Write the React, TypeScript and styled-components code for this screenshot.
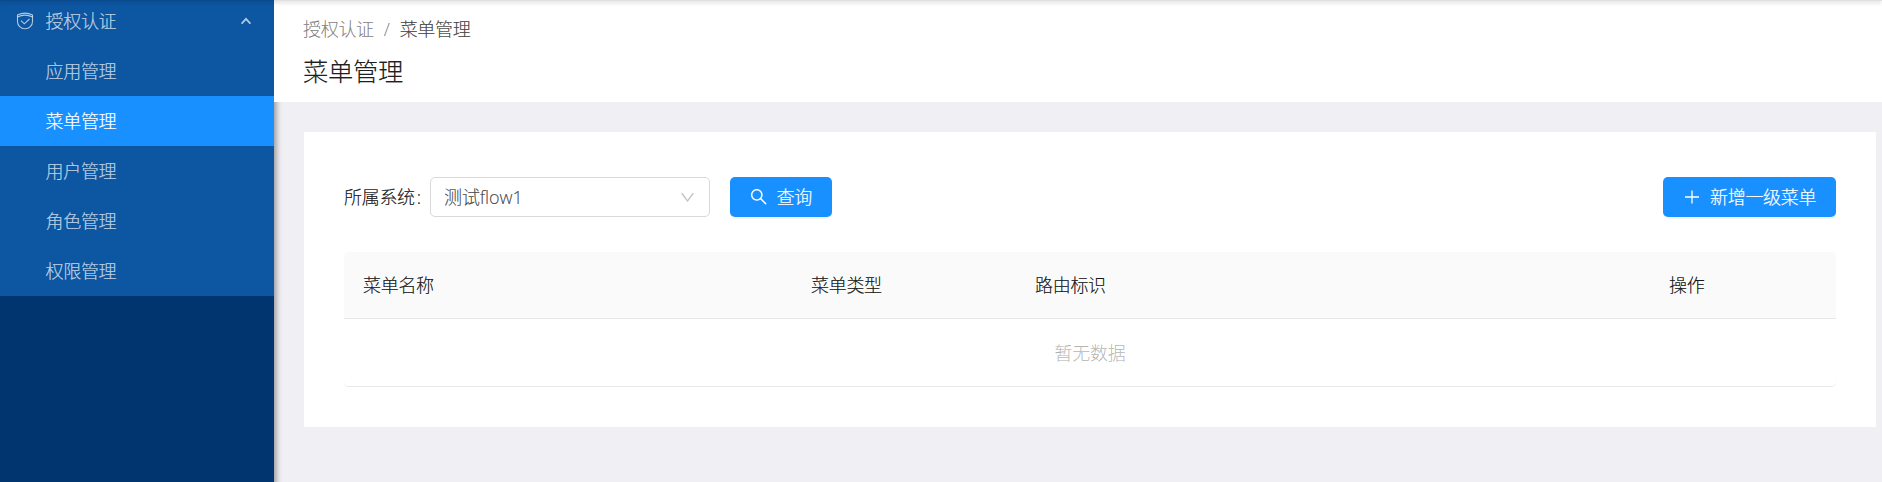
import React from 'react';
import styled, { createGlobalStyle } from 'styled-components';

const GlobalStyle = createGlobalStyle`
  *, *::before, *::after { box-sizing: border-box; }
  body {
    margin: 0;
    overflow: hidden;
    background: #f0eff4;
    color: rgba(0, 0, 0, 0.9);
    font: 300 18px/1.5 'Open Sans', 'Noto Sans CJK SC', sans-serif;
    letter-spacing: -0.3px;
    -webkit-text-stroke: 0.2px currentColor;
  }
  button { font: inherit; letter-spacing: inherit; }
`;

const Shell = styled.div`
  display: flex;
  height: 482px;
  overflow: hidden;
`;

const TopEdge = styled.div`
  position: absolute;
  z-index: 4;
  top: -1px;
  left: 0;
  right: 0;
  height: 2px;
  background: rgba(0, 0, 0, 0.12);
  box-shadow: 0 1px 4px rgba(0, 21, 41, 0.25);
`;

const Sidebar = styled.nav`
  position: relative;
  z-index: 2;
  flex: 0 0 274px;
  height: 500px;
  background: #00356f;
  box-shadow: 2px 0 6px rgba(0, 0, 0, 0.4);
`;

const MenuGroup = styled.div`
  margin-top: -4px;
  background: #0c56a2;
`;

const MenuItem = styled.div<{ $active?: boolean }>`
  display: flex;
  align-items: center;
  height: 50px;
  padding-left: 45.500px;
  color: ${(p) => (p.$active ? '#fff' : 'rgba(255, 255, 255, 0.68)')};
  background: ${(p) => (p.$active ? '#1890ff' : 'transparent')};
`;

const GroupTitle = styled(MenuItem)`
  padding: 0 23px 0 16px;

  span { flex: 1; margin-left: 11.500px; }
`;

const Main = styled.main`
  flex: 1;
  min-width: 0;
`;

const PageHeader = styled.header`
  position: relative;
  z-index: 3;
  height: 102px;
  padding: 16px 29px 0;
  background: #fff;
`;

const Breadcrumb = styled.div`
  display: flex;
  gap: 10px;
  line-height: 27px;
  color: rgba(0, 0, 0, 0.47);

  strong { font-weight: 300; color: rgba(0, 0, 0, 0.72); }
`;

const Title = styled.h1`
  margin: 10px 0 0;
  font-size: 25.300px;
  font-weight: 300;
  line-height: 36px;
`;

const Card = styled.section`
  height: 295px;
  margin: 30px 6px 0 30px;
  padding: 45px 40px 0;
  background: #fff;
`;

const Toolbar = styled.div`
  display: flex;
  align-items: center;
  height: 40px;
  margin-bottom: 35px;
`;

const Label = styled.label`
  display: flex;
  gap: 2px;
  width: 86px;
  white-space: nowrap;
`;

const Select = styled.div`
  display: flex;
  align-items: center;
  justify-content: space-between;
  width: 280px;
  height: 40px;
  margin-right: 20px;
  padding: 0 14px 0 13px;
  border: 1px solid #d9d9d9;
  border-radius: 5px;
  color: rgba(0, 0, 0, 0.7);

  span { letter-spacing: -0.1px; }
`;

const Button = styled.button<{ $width: number; $end?: boolean }>`
  display: flex;
  align-items: center;
  gap: 9px;
  width: ${(p) => p.$width}px;
  height: 40px;
  margin-left: ${(p) => (p.$end ? 'auto' : 0)};
  padding: 0 0 0 20px;
  border: 0;
  border-radius: 5px;
  background: #1890ff;
  color: #fff;
  white-space: nowrap;
  box-shadow: 0 2px 0 rgba(0, 0, 0, 0.045);
`;

const Table = styled.div`
  border-radius: 5px;
`;

const HeadRow = styled.div`
  display: grid;
  grid-template-columns: 448px 224px 634px 1fr;
  align-items: center;
  height: 67px;
  padding: 1px 0 0 19px;
  border-bottom: 1px solid #e8e8e8;
  border-radius: 5px 5px 0 0;
  background: #fafafa;
`;

const EmptyRow = styled.div`
  display: flex;
  align-items: center;
  justify-content: center;
  height: 68px;
  padding-top: 1px;
  border-bottom: 1px solid #e8e8e8;
  border-radius: 0 0 5px 5px;
  color: rgba(0, 0, 0, 0.27);
`;

const Glyph = styled.svg<{ $color?: string }>`
  flex: none;
  fill: ${(p) => p.$color ?? 'currentColor'};
`;

const ShieldIcon = () => (
  <svg width="18" height="18" viewBox="0 0 18 18" fill="none" stroke="currentColor" strokeWidth="1.100">
    <path d="M1.500 3Q9-.8 16.500 3v6.500c0 4-3.200 7.300-7.500 7.300s-7.500-3.300-7.500-7.300z" />
    <path d="M1.500 5Q9 1.200 16.500 5M5 8.700l3.300 3.100L13.500 7" />
  </svg>
);

const ChevronUp = () => (
  <svg width="10" height="8" viewBox="0 0 10 8" fill="none" stroke="currentColor" strokeWidth="1.900">
    <path d="M.6 6.700L5 1.900l4.400 4.800" />
  </svg>
);

const DownIcon = () => (
  <Glyph width="15" height="15" viewBox="64 64 896 896" $color="rgba(0,0,0,0.25)">
    <path d="M884 256h-75c-5.100 0-9.900 2.500-12.900 6.600L512 654.200 227.900 262.600c-3-4.100-7.800-6.600-12.900-6.600h-75c-6.500 0-10.300 7.400-6.500 12.700l352.600 486.100c12.800 17.600 39 17.600 51.700 0l352.600-486.100c3.900-5.300.1-12.700-6.400-12.700z" />
  </Glyph>
);

const SearchIcon = () => (
  <Glyph width="17.500" height="17.500" viewBox="64 64 896 896">
    <path d="M909.600 854.500L649.900 594.800C690.200 542.700 712 479 712 412c0-80.200-31.300-155.400-87.900-212.100-56.600-56.700-132-87.900-212.100-87.900s-155.500 31.300-212.100 87.900C143.200 256.500 112 331.800 112 412c0 80.100 31.300 155.500 87.900 212.100C256.500 680.800 331.800 712 412 712c67 0 130.600-21.800 182.700-62l259.700 259.600a8.200 8.200 0 0 0 11.600 0l43.600-43.500a8.200 8.200 0 0 0 0-11.600zM570.400 570.400C528 612.700 471.800 636 412 636s-116-23.300-158.400-65.600C211.300 528 188 471.800 188 412s23.300-116.100 65.600-158.400C296 211.300 352.200 188 412 188s116.100 23.200 158.400 65.600S636 352.200 636 412s-23.300 116.100-65.600 158.400z" />
  </Glyph>
);

const PlusIcon = () => (
  <svg width="18" height="18" viewBox="0 0 18 18" stroke="currentColor" strokeWidth="1.300">
    <path d="M9 2.500v13M2 9h14" />
  </svg>
);

const items = ['应用管理', '菜单管理', '用户管理', '角色管理', '权限管理'];
const columns = ['菜单名称', '菜单类型', '路由标识', '操作'];

export default function App() {
  return (
    <>
      <GlobalStyle />
      <TopEdge />
      <Shell>
        <Sidebar>
          <MenuGroup>
            <GroupTitle>
              <ShieldIcon />
              <span>授权认证</span>
              <ChevronUp />
            </GroupTitle>
            {items.map((item) => (
              <MenuItem key={item} $active={item === '菜单管理'}>{item}</MenuItem>
            ))}
          </MenuGroup>
        </Sidebar>
        <Main>
          <PageHeader>
            <Breadcrumb>
              <span>授权认证</span>
              <span>/</span>
              <strong>菜单管理</strong>
            </Breadcrumb>
            <Title>菜单管理</Title>
          </PageHeader>
          <Card>
            <Toolbar>
              <Label><span>所属系统</span><span>:</span></Label>
              <Select>
                <span>测试flow1</span>
                <DownIcon />
              </Select>
              <Button $width={102}><SearchIcon />查询</Button>
              <Button $width={173} $end><PlusIcon />新增一级菜单</Button>
            </Toolbar>
            <Table>
              <HeadRow>{columns.map((c) => <span key={c}>{c}</span>)}</HeadRow>
              <EmptyRow>暂无数据</EmptyRow>
            </Table>
          </Card>
        </Main>
      </Shell>
    </>
  );
}
